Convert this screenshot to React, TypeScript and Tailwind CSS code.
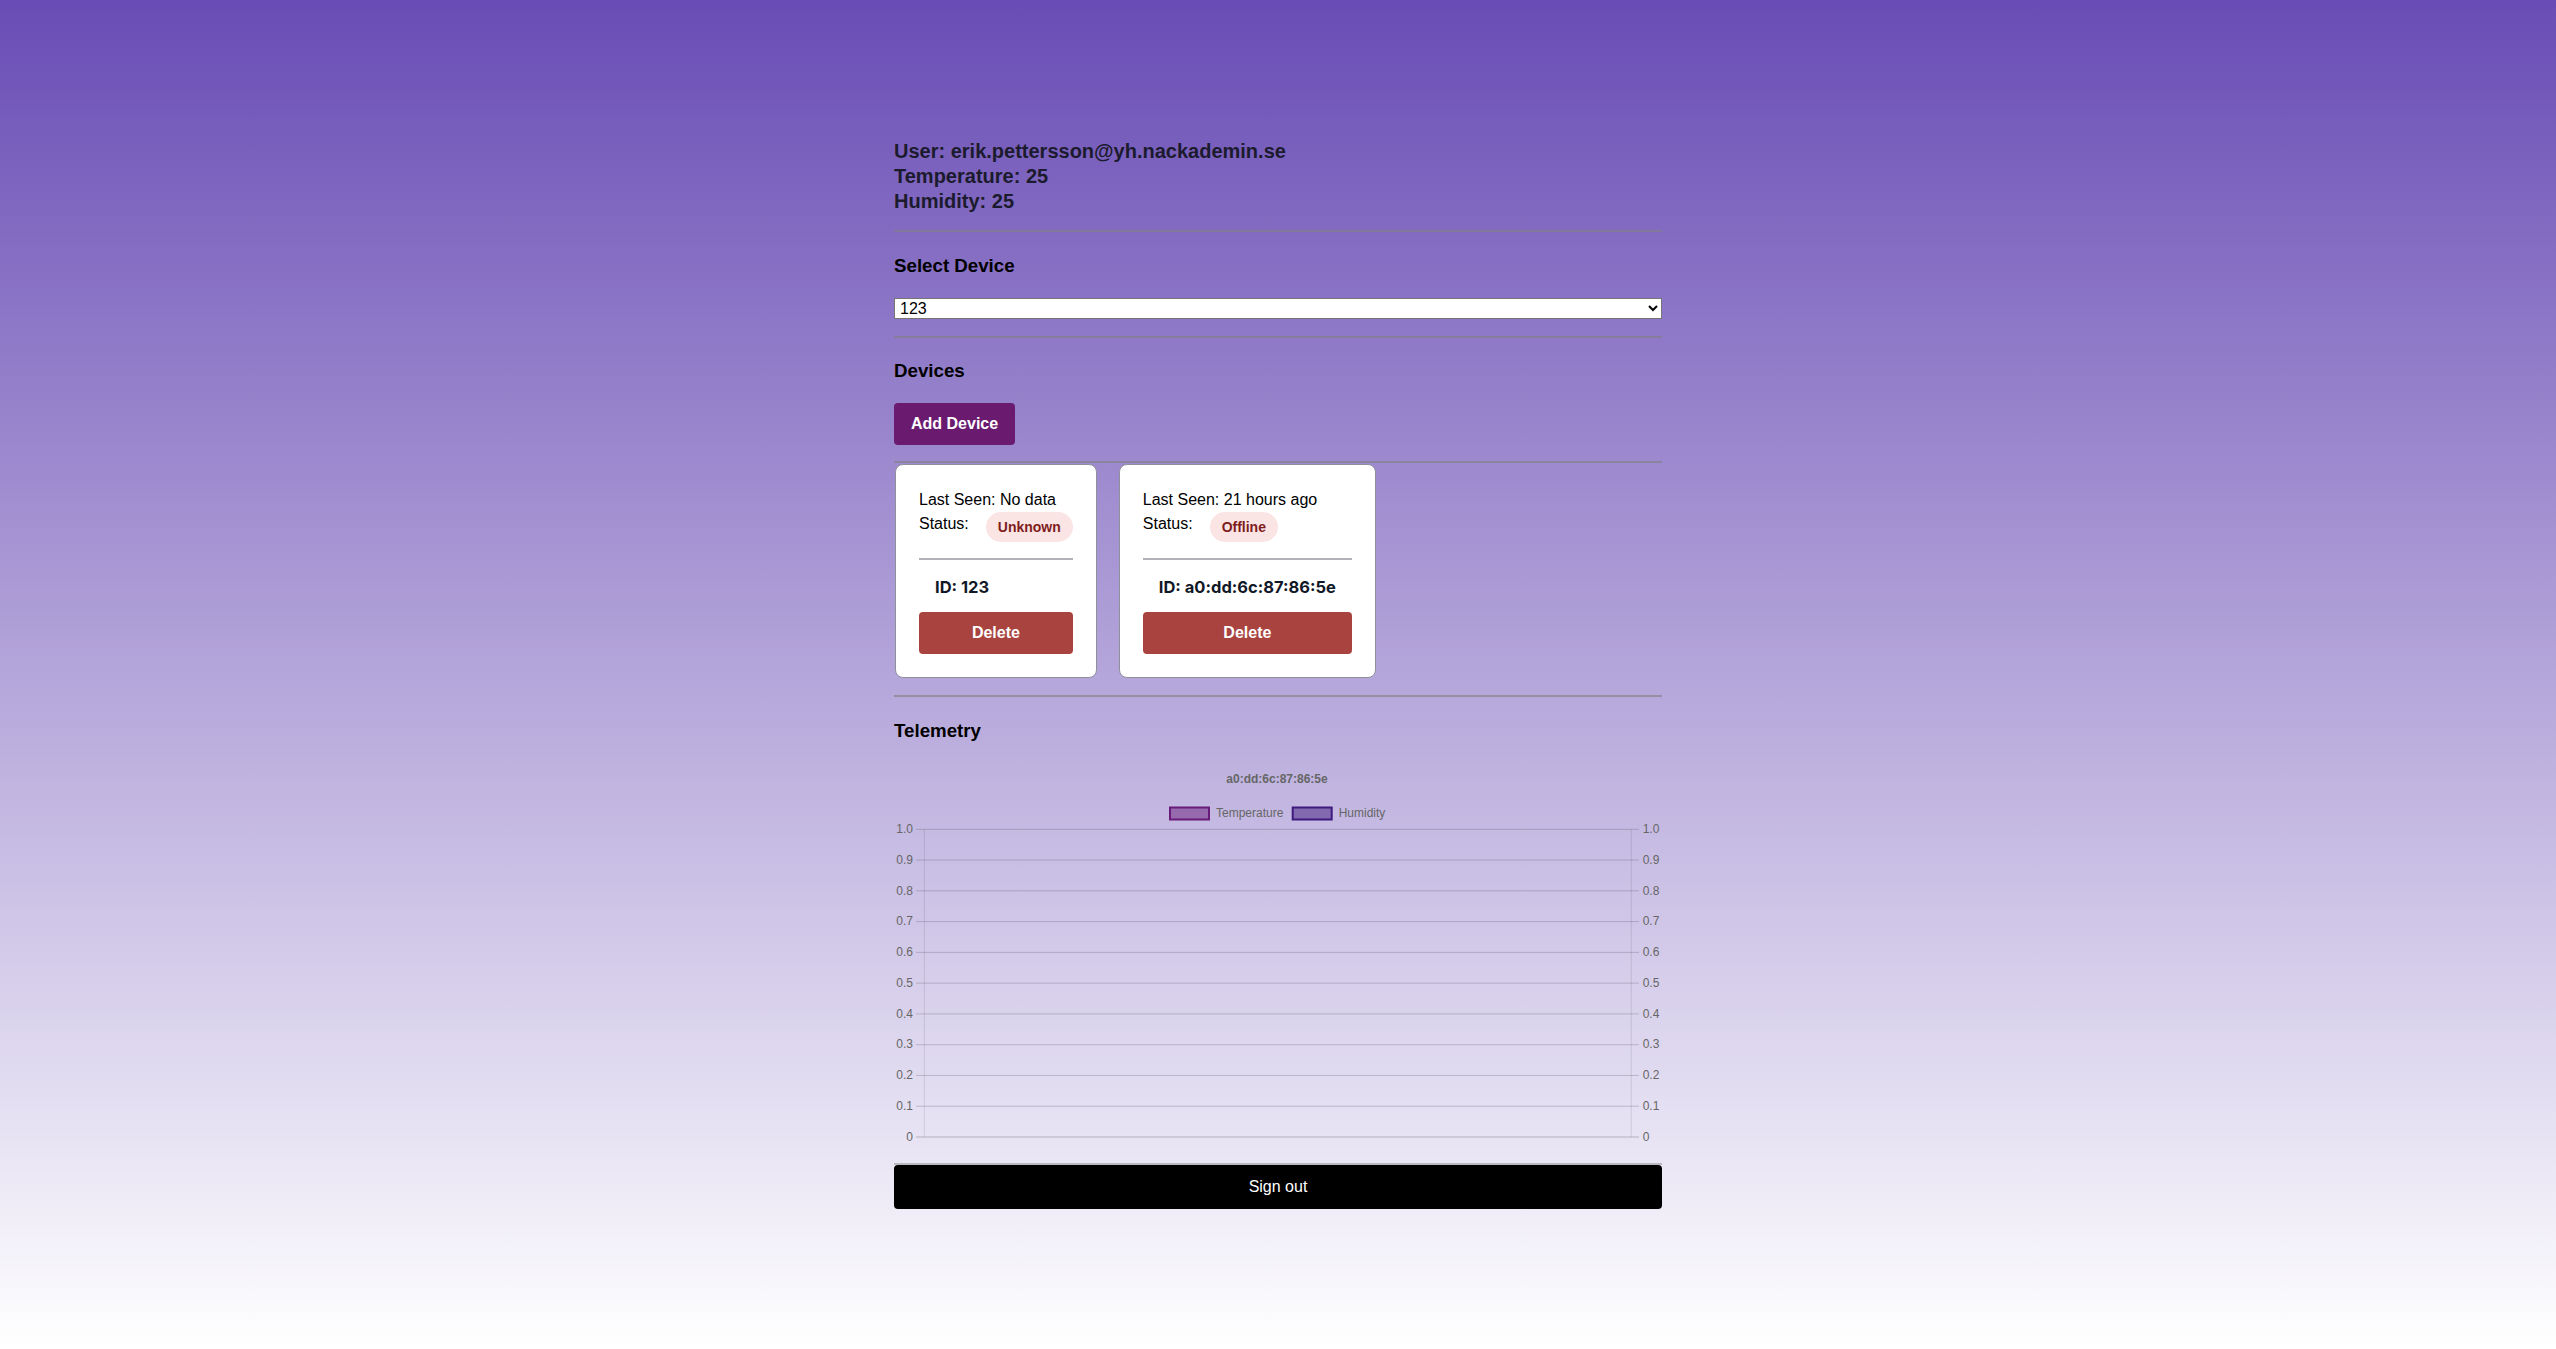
import React from "react";

const ticks = ["1.0", "0.9", "0.8", "0.7", "0.6", "0.5", "0.4", "0.3", "0.2", "0.1", "0"];

function Chart() {
  const top = 64.3;
  const bottom = 372;
  const step = (bottom - top) / 10;
  const left = 30.3;
  const right = 737.3;
  return (
    <svg width="768" height="390" viewBox="0 0 768 390" className="block" style={{ fontFamily: "'Liberation Sans', Arial, sans-serif" }}>
      <text x="383" y="15" textAnchor="middle" dominantBaseline="middle" fontSize="12" fontWeight="bold" fill="#666">
        a0:dd:6c:87:86:5e
      </text>
      <rect x="276" y="42.5" width="39" height="12" fill="rgba(106,27,122,0.5)" stroke="#6a1b7a" strokeWidth="2" />
      <text x="322" y="49" dominantBaseline="middle" fontSize="12" fill="#666">Temperature</text>
      <rect x="398.7" y="42.5" width="39" height="12" fill="rgba(63,26,125,0.5)" stroke="#3f1a7d" strokeWidth="2" />
      <text x="444.7" y="49" dominantBaseline="middle" fontSize="12" fill="#666">Humidity</text>
      {ticks.map((t, i) => {
        const y = top + i * step;
        return (
          <g key={t}>
            <line x1="22" x2="745" y1={y} y2={y} stroke={i === 10 ? "rgba(0,0,0,0.22)" : "rgba(0,0,0,0.17)"} strokeWidth="1" />
            <text x="19" y={y + 0.5} textAnchor="end" dominantBaseline="middle" fontSize="12" fill="#666">{t}</text>
            <text x="748.7" y={y + 0.5} textAnchor="start" dominantBaseline="middle" fontSize="12" fill="#666">{t}</text>
          </g>
        );
      })}
      <line x1={left} x2={left} y1={top} y2={bottom} stroke="rgba(0,0,0,0.1)" strokeWidth="1" />
      <line x1={right} x2={right} y1={top} y2={bottom} stroke="rgba(0,0,0,0.1)" strokeWidth="1" />
    </svg>
  );
}

function DeviceCard({ lastSeen, status, id }: { lastSeen: string; status: string; id: string }) {
  return (
    <div className="bg-white border border-[#8e919b] rounded-lg p-[23px] flex flex-col">
      <div className="text-[16px] leading-6 text-black whitespace-nowrap">Last Seen: {lastSeen}</div>
      <div className="flex items-start">
        <span className="text-[16px] leading-6 text-black">Status:</span>
        <span className="ml-[17px] rounded-full bg-[#fbe4e4] text-[#7f1d1d] text-[14px] leading-5 font-bold px-3 py-[5px]">
          {status}
        </span>
      </div>
      <div className="mt-4 border-t-2 border-[#b0b2b8]" />
      <div className="mt-[15px] px-4 text-[16.5px] leading-6 font-bold text-[#111827] whitespace-nowrap font-['Inter',sans-serif]">
        ID: {id}
      </div>
      <button className="mt-[13px] h-[42px] w-full rounded-[4px] bg-[#a94340] text-white text-[16px] font-bold">
        Delete
      </button>
    </div>
  );
}

export default function App() {
  return (
    <div className="min-h-screen w-full bg-[linear-gradient(to_bottom,#694cb5,#ffffff)] font-['Liberation_Sans',Arial,sans-serif]">
      <div className="mx-auto w-[768px] pt-[139px] pb-[100px]">
        <div className="text-[20px] leading-[25px] font-bold text-[#1c1b2e]">
          <div>User: erik.pettersson@yh.nackademin.se</div>
          <div>Temperature: 25</div>
          <div>Humidity: 25</div>
        </div>
        <div className="mt-4 border-t-2 border-[rgba(128,128,128,0.6)]" />
        <h3 className="mt-[21px] text-[18.72px] leading-[25px] font-bold text-black">Select Device</h3>
        <select
          defaultValue="123"
          className="mt-5 block w-full h-[21px] py-0 bg-white border border-[#767676] text-[16px] leading-[19px] text-black px-px"
        >
          <option value="123">123</option>
          <option value="a0:dd:6c:87:86:5e">a0:dd:6c:87:86:5e</option>
        </select>
        <div className="mt-[17px] border-t-2 border-[rgba(128,128,128,0.6)]" />
        <h3 className="mt-5 text-[18.72px] leading-[25px] font-bold text-black">Devices</h3>
        <button className="mt-5 h-[42px] px-[17px] rounded-[4px] bg-[#6a1b70] text-white text-[16px] font-bold">
          Add Device
        </button>
        <div className="mt-4 border-t-2 border-[rgba(128,128,128,0.6)]" />
        <div className="mt-px flex items-start gap-[22px] pl-px">
          <DeviceCard lastSeen="No data" status="Unknown" id="123" />
          <DeviceCard lastSeen="21 hours ago" status="Offline" id="a0:dd:6c:87:86:5e" />
        </div>
        <div className="mt-[17px] border-t-2 border-[rgba(128,128,128,0.6)]" />
        <h3 className="mt-[21px] text-[18.72px] leading-[25px] font-bold text-black">Telemetry</h3>
        <div className="mt-[22px]">
          <Chart />
        </div>
        <div className="mt-[8px] border-t-2 border-[rgba(128,128,128,0.45)]" />
        <button className="block h-[44px] w-full rounded-[4px] bg-black text-white text-[16px]">Sign out</button>
      </div>
    </div>
  );
}
